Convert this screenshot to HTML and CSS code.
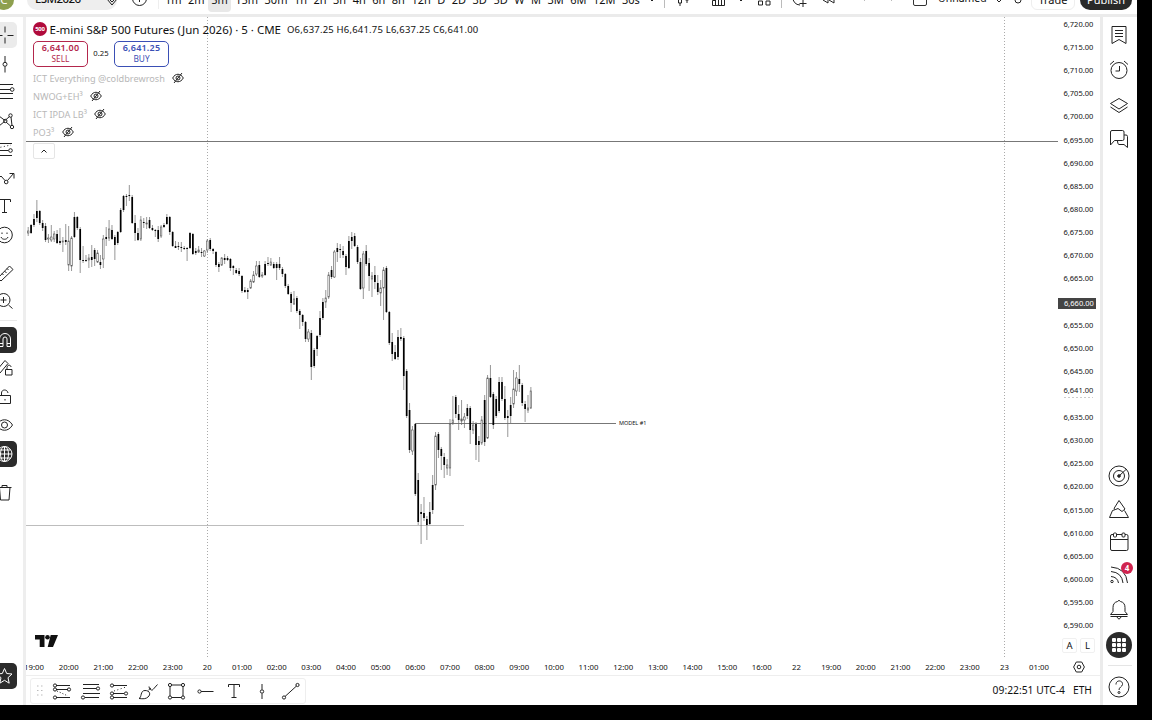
FILE: index.html
```html
<!DOCTYPE html>
<html>
<head>
	<meta charset="utf-8">
	<title>ESM2026</title>
	<link rel="stylesheet" href="styles.css">
</head>
<body>
	<div class="app">
		<div class="topbar">
			<div class="topbar-row">
				<div class="avatar">C</div>
				<div class="symbol"><span>ESM2026</span></div>
				<svg class="sym-diamond" width="14" height="14" viewBox="0 0 14 14"><path d="M2 6l5-5 5 5-5 6zM5 7l2 2 2-2"/></svg>
				<svg class="compare" width="17" height="17" viewBox="0 0 17 17"><circle cx="8.500" cy="8.500" r="7"/><path d="M8.500 5v7M5 8.500h7"/></svg>
				<div class="sep"></div>
				<div class="intervals">
					<span>1m</span><span>2m</span><span class="selected">5m</span><span>15m</span><span>30m</span><span>1h</span><span>2h</span><span>3h</span><span>4h</span><span>6h</span><span>8h</span><span>12h</span><span>D</span><span>2D</span><span>3D</span><span>5D</span><span>W</span><span>M</span><span>3M</span><span>6M</span><span>12M</span><span>30s</span>
				</div>
				<svg class="top-icons" width="275" height="24" viewBox="640 -12 275 24">
					<path d="M650 -1l2 2 2-2M739 -1l2 2 2-2"/>
					<path class="faint" d="M664.500-10v18M781.500-10v18"/>
					<path d="M678.500-6h3v9h-3zM680 3v3M685.500-6h3v6h-3zM687 0v3"/>
					<path d="M712.500 5.500v-5h3v-3h3v2h3v-4h3v10zM715.500 0v5M718.500 0v5M721.500 0v5"/>
					<path d="M758.500-6h4v4h-4zM766-6h4v4h-4zM758.500 1h4v4h-4zM766 1h4v4h-4z"/>
					<path d="M793-3a7 7 0 0 0 7 8M803 0v7M799.500 3.500h7"/>
					<path d="M828-3l-5 3 5 3zM834-3l-5 3 5 3z"/>
					<path class="faint" d="M861-3l4 4M861-1h7M895-3l-4 4M894-1h-7"/>
				</svg>
				<div class="layout-box"></div>
				<span class="layout-name">Unnamed</span>
				<svg class="search" width="30" height="16" viewBox="0 0 30 16"><path d="M3 8l2 2 2-2"/><circle cx="24" cy="8" r="3"/></svg>
				<div class="trade">Trade</div>
				<div class="publish">Publish</div>
			</div>
		</div>

		<div class="main">
			<div class="left-tools">
				<div class="tool active"><svg viewBox="0 0 28 28"><path d="M14 5.500v6M14 16.500v6M16.500 14.500h6M5.500 14.500h6"/></svg></div>
				<div class="tool"><svg viewBox="0 0 28 28"><path d="M14 6v6M14 16.500v6"/><circle cx="14" cy="14.300" r="2"/></svg></div>
				<div class="tool"><svg viewBox="0 0 28 28"><path d="M5 6.500h17M5 11.500h14.500M5 15.500h17M5 20.500h17"/><circle cx="21.200" cy="11.500" r="1.800"/></svg></div>
				<div class="tool"><svg viewBox="0 0 28 28"><path d="M8 9l6 4.500 4.500-4M15 15l4.500 4M8 19l5.500-4.500M20 10l1 8.500M8 9v10"/><circle cx="19.500" cy="8.500" r="1.700"/><circle cx="14.300" cy="14" r="1.700"/><circle cx="21" cy="20" r="1.700"/></svg></div>
				<div class="tool"><svg viewBox="0 0 28 28"><path d="M5 8.500h16M5 15.500h12.500M5 20.500h16"/><path stroke-dasharray="1 2.500" d="M6 13l14-3"/><circle cx="19.500" cy="15.500" r="1.800"/></svg></div>
				<div class="tool"><svg viewBox="0 0 28 28"><path d="M5 17l5-5 4 4.500M16.500 16.500l6-7M18.500 9.500h4.500v5"/><circle cx="15.200" cy="18" r="1.800"/></svg></div>
				<div class="tool"><svg viewBox="0 0 28 28"><path d="M7.500 10V7.500h12V10M13.500 7.500v13M11 20.500h5"/></svg></div>
				<div class="tool"><svg viewBox="0 0 28 28"><circle cx="13.500" cy="14" r="7.800"/><path d="M10 16c1 3 6 3 7 0M11 11.500v1.500M16 11.500v1.500"/></svg></div>
				<div class="tool gap"><svg viewBox="0 0 28 28"><path d="M7 19L18.500 7l3.500 3.500L10 22zM16 9.500l1.500 1.500M13.500 12l2 2M11 14.500l1.500 1.500"/></svg></div>
				<div class="tool"><svg viewBox="0 0 28 28"><circle cx="12.500" cy="13" r="6.500"/><path d="M17.500 18l4 3.500M12.500 10v6M9.500 13h6"/></svg></div>
				<div class="tool-line"></div>
				<div class="tool dark"><svg viewBox="0 0 28 28"><path d="M8.500 20.500V13a5.500 5.500 0 0 1 11 0v7.500h-3.500V13a2 2 0 0 0-4 0v7.500zM8.500 17.500h3.500M16 17.500h3.500"/></svg></div>
				<div class="tool"><svg viewBox="0 0 28 28"><path d="M6 16l8-9.500 3 3L9 19M14.500 15.500h6.500v5.500h-6.500zM16 15.500v-2c0-3 4-3 4-.5"/></svg></div>
				<div class="tool"><svg viewBox="0 0 28 28"><path d="M8 12.500h11.500v8H8zM10.500 12.500V10c0-4 6-4 6.500 0M14 16v1.500"/></svg></div>
				<div class="tool"><svg viewBox="0 0 28 28"><path d="M5.500 14c4-7 12-7 16 0-4 7-12 7-16 0z"/><circle cx="13.500" cy="14" r="3"/></svg></div>
				<div class="tool dark"><svg viewBox="0 0 28 28"><circle cx="13.500" cy="14" r="7.500"/><ellipse cx="13.500" cy="14" rx="4" ry="7.500"/><path d="M13.500 6.500v15M6 14h15M7.500 10h12M7.500 18h12"/></svg></div>
				<div class="tool gap"><svg viewBox="0 0 28 28"><path d="M7 9.500h13.500M11 9.500v-2h5v2M8.500 9.500l1 12.500h8.500l1-12.500"/></svg></div>
				<div class="tool dark star"><svg viewBox="0 0 28 28"><path d="M13.500 6.500l2.200 5 5.300.5-4 3.700 1.200 5.500-4.700-2.900-4.700 2.900L10 15.700 6 12l5.300-.5z"/></svg></div>
			</div>

			<div class="center">
				<div class="chart-row">
					<div class="pane">
						<svg id="chart" class="chart" width="1032" height="640" viewBox="26 17 1032 640">
							<path class="session" d="M207.500 17v640M1004.500 17v640"/>
							<path class="level" d="M26 141.500h1032M415 423.500h201"/>
							<path class="level-light" d="M26 525.500h438"/>
							<text class="model" x="619" y="425.300">MODEL #1</text>
							<g id="candles"></g>
						</svg>
						<div class="legend">
							<div class="title-row">
								<span class="badge500">500</span>
								<span class="title">E-mini S&amp;P 500 Futures (Jun 2026) · 5 · CME</span>
								<span class="ohlc">O6,637.25 H6,641.75 L6,637.25 C6,641.00</span>
							</div>
							<div class="quotes">
								<div class="quote sell"><b>6,641.00</b><span>SELL</span></div>
								<span class="spread">0.25</span>
								<div class="quote buy"><b>6,641.25</b><span>BUY</span></div>
							</div>
							<div class="study"><span>ICT Everything @coldbrewrosh</span><svg class="hidden-eye" viewBox="0 0 12 12"><path d="M.7 6c2.500-5 8-5 10.600 0-2.600 5-8.100 5-10.600 0zM2 11l8-10"/><circle cx="6" cy="6" r="2"/></svg></div>
							<div class="study"><span>NWOG+EH³</span><svg class="hidden-eye" viewBox="0 0 12 12"><path d="M.7 6c2.500-5 8-5 10.600 0-2.600 5-8.100 5-10.600 0zM2 11l8-10"/><circle cx="6" cy="6" r="2"/></svg></div>
							<div class="study"><span>ICT IPDA LB³</span><svg class="hidden-eye" viewBox="0 0 12 12"><path d="M.7 6c2.500-5 8-5 10.600 0-2.600 5-8.100 5-10.600 0zM2 11l8-10"/><circle cx="6" cy="6" r="2"/></svg></div>
							<div class="study"><span>PO3³</span><svg class="hidden-eye" viewBox="0 0 12 12"><path d="M.7 6c2.500-5 8-5 10.600 0-2.600 5-8.100 5-10.600 0zM2 11l8-10"/><circle cx="6" cy="6" r="2"/></svg></div>
							<div class="collapse"><svg width="8" height="6" viewBox="0 0 8 6"><path d="M1.500 4.500L4 2l2.500 2.500"/></svg></div>
						</div>
						<svg class="tv-logo" width="23" height="12" viewBox="0 0 23 12"><path d="M0 0h9.500v12H4.700V4.600H0zM15.700 0H23l-5 12h-5.300z"/><circle cx="12.500" cy="2.300" r="2.300"/></svg>
					</div>
					<div class="price-axis">
						<div id="prices" class="prices"></div>
						<div class="scale-buttons"><span>A</span><span>L</span></div>
					</div>
				</div>
				<div class="time-row">
					<div id="times" class="times"></div>
					<div class="axis-settings"><svg width="12" height="12" viewBox="0 0 12 12"><path d="M3.300 1h5.400L11.400 6 8.700 11H3.300L.6 6z"/><circle cx="6" cy="6" r="1.800"/></svg></div>
				</div>
				<div class="bottom-row">
					<div class="favorites">
						<svg class="drag" width="8" height="12" viewBox="0 0 8 12"><path d="M1 1h1.500M5 1h1.500M1 5.500h1.500M5 5.500h1.500M1 10h1.500M5 10h1.500"/></svg>
						<svg viewBox="0 0 28 28"><path d="M8 8.500h14M8 12.500h12M8 20.500h14"/><path stroke-dasharray="1 2" d="M9 14l11 5"/><circle cx="7" cy="8.500" r="1.600"/><circle cx="21" cy="12.500" r="1.600"/><circle cx="7" cy="12.500" r="1.600"/><circle cx="7" cy="20.500" r="1.600"/></svg>
						<svg viewBox="0 0 28 28"><path d="M6 7.500h16M6 11.500h13.500M6 16.500h17M8 20.500h14"/><circle cx="21" cy="11.500" r="1.600"/><circle cx="6" cy="20.500" r="1.600"/></svg>
						<svg viewBox="0 0 28 28"><path d="M8 8.500h14M8 16.500h11M8 20.500h14"/><path stroke-dasharray="1 2.500" d="M9 14l12-4"/><circle cx="7" cy="8.500" r="1.600"/><circle cx="7" cy="16.500" r="1.600"/><circle cx="21" cy="16.500" r="1.600"/><circle cx="7" cy="20.500" r="1.600"/></svg>
						<svg viewBox="0 0 28 28"><path d="M5 21.500c3-1 1-8 6-8 5 0 6 4 3 6.500-2 2-5 2-9 1.500zM15 9.500c0 3 3 4.500 4 3l4.500-5M14.500 13l2.500-2"/></svg>
						<svg viewBox="0 0 28 28"><path d="M9.500 8h10M9.500 20.500h10M8 9.500v9.500M21 9.500v9.500"/><circle cx="8" cy="8" r="1.600"/><circle cx="21" cy="8" r="1.600"/><circle cx="8" cy="20.500" r="1.600"/><circle cx="21" cy="20.500" r="1.600"/></svg>
						<svg viewBox="0 0 28 28"><path d="M10 14.500h12.500"/><circle cx="8.500" cy="14.500" r="1.600"/></svg>
						<svg viewBox="0 0 28 28"><path d="M8.500 10V7.500h11V10M14 7.500v13M11.500 20.500h5"/></svg>
						<svg viewBox="0 0 28 28"><path d="M14 7v5.500M14 16.500V22"/><circle cx="14" cy="14.500" r="1.700"/></svg>
						<svg viewBox="0 0 28 28"><path d="M8 19.500L19.500 9"/><circle cx="7" cy="20.500" r="1.600"/><circle cx="20.500" cy="8" r="1.600"/></svg>
					</div>
					<div class="clock"><span>09:22:51 UTC-4</span><span>ETH</span></div>
				</div>
			</div>

			<div class="right-tools">
				<div class="panel-btn first"><svg viewBox="0 0 28 28"><path d="M7 5.500h14v17l-7-4-7 4zM10 9.500h8M10 12.500h8M10 15.500h8"/></svg></div>
				<div class="panel-btn first"><svg viewBox="0 0 28 28"><circle cx="14" cy="14.500" r="8"/><path d="M14.500 10v5h-4M5 8.500l4-3.500M23 8.500L19 5"/></svg></div>
				<div class="panel-btn first"><svg viewBox="0 0 28 28"><path d="M5.500 12.500L14 7.500l8.500 5-8.500 5.500zM5.500 16l8.500 5.500 8.500-5.500"/></svg></div>
				<div class="panel-btn first"><svg viewBox="0 0 28 28"><path d="M5.500 20V7q0-1.500 1.500-1.500h10.500q1.500 0 1.500 1.500v7q0 1.500-1.500 1.500H9.500zM19 10h2q1.500 0 1.500 1.500V22.500l-3.500-3h-5q-1.500 0-1.500-3.500"/></svg></div>
				<div class="panel-btn bottom-start"><svg viewBox="0 0 28 28"><circle cx="14" cy="14" r="10"/><circle cx="14" cy="14" r="5.500"/><circle class="solid" cx="14" cy="14" r="1.300"/><path d="M14 14l7-6.500"/></svg></div>
				<div class="panel-btn"><svg viewBox="0 0 28 28"><path d="M9 13.500l5-8 6 8.500-3 2.500-4-3-2.500 1zM7.500 15.500l-3 7h19l-4-7M7.500 15.500l3-1"/></svg></div>
				<div class="panel-btn"><svg viewBox="0 0 28 28"><rect x="5.500" y="6.500" width="17.500" height="16" rx="1.500"/><path d="M5.500 11.500h17.500"/><rect class="paper" x="8.500" y="5" width="3" height="4" rx="1"/><rect class="paper" x="17" y="5" width="3" height="4" rx="1"/></svg></div>
				<div class="panel-btn"><svg viewBox="0 0 28 28"><path d="M6 6q15 1 16.500 16M6 10.500q11 1 12 11.500M6 15.500q6.500.5 7.500 6.500"/><circle cx="7" cy="20.500" r="1.200"/></svg><span class="count">4</span></div>
				<div class="panel-btn bell"><svg viewBox="0 0 28 28"><path d="M5.500 19.500l2.500-3v-4q0-5 4.500-6 1.500-2.500 3 0 4.500 1 4.500 6v4l2.500 3zM5.500 21.500h17M12 22q2 4 4 0"/></svg></div>
				<div class="panel-btn"><div class="apps"><i></i><i></i><i></i><i></i><i></i><i></i><i></i><i></i><i></i></div></div>
				<div class="panel-line"></div>
				<div class="panel-btn help"><svg viewBox="0 0 28 28"><circle cx="14" cy="14" r="10"/><path d="M11 11.500c0-5 7-4.500 6.500 0-.5 2.500-3.500 2.500-3.500 5.500"/><circle cx="14" cy="19.500" r="1"/></svg></div>
			</div>
		</div>
	</div>
	<script src="chart.js"></script>
</body>
</html>
```
FILE: styles.css
```css
* {
	box-sizing: border-box;
}
body {
	margin: 0;
	background: #000;
	color: #111;
	font-family: "Noto Sans", "Open Sans", sans-serif;
	overflow: hidden;
}
svg {
	fill: none;
	stroke: #222;
	stroke-width: 1;
	flex: none;
}
.app {
	width: 1137px;
	height: 705px;
	background: #fff;
	display: flex;
	flex-direction: column;
}

/* top bar, scrolled half out of view */
.topbar {
	height: 17px;
	border-bottom: 3px solid #ebebeb;
	overflow: hidden;
	flex: none;
}
.topbar-row {
	display: flex;
	align-items: center;
	height: 24px;
	margin-top: -12px;
	font-size: 11.5px;
	line-height: 24px;
}
.avatar {
	width: 20px;
	height: 20px;
	margin-left: -6px;
	border-radius: 50%;
	background: #8ea04f;
	color: #fff;
	text-align: center;
	line-height: 19px;
	flex: none;
}
.symbol {
	width: 90px;
	height: 20px;
	margin-left: 13px;
	padding-left: 8px;
	border-radius: 10px;
	background: #eee;
	line-height: 18px;
	font-weight: 500;
	letter-spacing: -0.6px;
}
.sym-diamond {
	margin-left: -12px;
}
.compare {
	margin: -4px 0 0 12px;
}
.sep {
	width: 1px;
	height: 18px;
	margin-left: 10px;
	background: #eee;
}
.intervals {
	width: 475px;
	margin-left: 6px;
	display: flex;
	justify-content: space-between;
	line-height: 21px;
	font-size: 11px;
}
.selected {
	margin: 0 -2px 0 -3px;
	padding: 0 3px;
	height: 23px;
	border-radius: 4px;
	background: #e8e8e8;
}
.faint {
	stroke: #bbb;
}
.layout-box {
	width: 14px;
	height: 12px;
	margin-left: -2px;
	border: 1px solid #333;
	border-radius: 2px;
}
.layout-name {
	width: 48px;
	margin-left: 11px;
	font-size: 10.5px;
	line-height: 21px;
	height: 24px;
}
.search {
	margin-left: 8px;
}
.trade {
	width: 44px;
	height: 20px;
	margin-left: 7px;
	border: 1px solid #eee;
	border-radius: 6px;
	text-align: center;
	line-height: 17px;
	font-size: 11px;
}
.publish {
	width: 52px;
	height: 22px;
	margin-left: 5px;
	margin-top: -3px;
	border-radius: 10px;
	background: #292929;
	color: #fff;
	text-align: center;
	line-height: 23px;
	font-size: 11px;
}

.main {
	flex: 1;
	min-height: 0;
	display: flex;
}

/* drawing tools */
.left-tools {
	width: 26px;
	padding-top: 4px;
	padding-bottom: 16px;
	border-right: 3px solid #eee;
	overflow: hidden;
	display: flex;
	flex-direction: column;
	flex: none;
}
.tool {
	width: 28px;
	height: 28.5px;
	margin-left: -11px;
	display: flex;
	align-items: center;
	flex: none;
}
.tool svg {
	width: 28px;
	height: 28px;
	margin-left: 1.5px;
}
.active, .dark {
	height: 26px;
	margin-top: 1.2px;
	margin-bottom: 1.3px;
	border-radius: 5px;
}
.active {
	background: #ebebeb;
}
.dark {
	background: #2b2b2b;
}
.dark svg {
	stroke: #fff;
}
.gap {
	margin-top: 9.5px;
}
.tool-line {
	height: 1px;
	width: 17px;
	margin: 5px 0 4px;
	background: #e8e8e8;
	flex: none;
}
.star {
	margin-top: auto;
	margin-bottom: 0;
}

/* chart */
.center {
	width: 1074px;
	display: flex;
	flex-direction: column;
	flex: none;
}
.chart-row {
	display: flex;
	height: 640px;
}
.pane {
	display: grid;
	width: 1032px;
}
.chart, .legend, .tv-logo {
	grid-area: 1 / 1;
}
.session {
	stroke: #aaa;
	stroke-dasharray: 1 2;
}
.level {
	stroke: #777;
}
.level-light {
	stroke: #bdbdbd;
}
.model {
	fill: #111;
	stroke: none;
	font-size: 5.5px;
}
.wick {
	stroke: #6a6a6a;
	stroke-width: 0.7;
}
.down {
	fill: #000;
	stroke: none;
}
.up {
	fill: #fff;
	stroke: #555;
	stroke-width: 0.6;
}
.tv-logo {
	align-self: end;
	margin: 0 0 10px 9px;
	fill: #111;
	stroke: none;
}
.legend {
	padding: 5px 0 0 7px;
}
.title-row {
	display: flex;
	align-items: center;
	height: 15px;
	white-space: nowrap;
}
.badge500 {
	width: 14px;
	height: 14px;
	border-radius: 50%;
	background: #b00b3c;
	color: #fff;
	font-size: 6px;
	font-weight: bold;
	line-height: 14px;
	text-align: center;
	letter-spacing: -0.2px;
	position: relative;
	top: -1px;
}
.title {
	width: 240px;
	padding-left: 2.5px;
	font-size: 11.5px;
}
.ohlc {
	font-size: 9.5px;
	letter-spacing: 0.2px;
	line-height: 13px;
	padding-bottom: 1px;
}
.quotes {
	display: flex;
	align-items: center;
	margin-top: 3px;
	height: 28px;
}
.quote {
	width: 55px;
	height: 26px;
	border: 1px solid;
	border-radius: 5px;
	display: flex;
	flex-direction: column;
	align-items: center;
	padding-top: 1px;
	font-size: 8.3px;
	line-height: 10.5px;
}
.quote b {
	font-size: 9px;
	font-weight: 600;
	letter-spacing: 0.2px;
}
.sell {
	color: #b3264c;
}
.buy {
	color: #3a4fb5;
}
.spread {
	width: 26px;
	padding-bottom: 3px;
	text-align: center;
	font-size: 7.7px;
}
.study {
	display: flex;
	align-items: center;
	height: 18px;
	color: #b8b8b8;
	font-size: 9.2px;
	white-space: nowrap;
	position: relative;
	top: 1px;
}
.hidden-eye {
	width: 12px;
	height: 12px;
	margin-left: 7.5px;
}
.collapse {
	width: 22px;
	height: 16px;
	margin-top: 3px;
	border: 1px solid #e5e5e5;
	border-radius: 2px;
	display: flex;
	align-items: center;
	justify-content: center;
}

.price-axis {
	width: 42px;
	display: flex;
	flex-direction: column;
	overflow: hidden;
}
.prices {
	margin-top: -4.1px;
}
.price {
	height: 23.13px;
	display: flex;
	align-items: center;
	width: 38px;
	padding-left: 5.5px;
	font-size: 7.5px;
}
.price span {
	line-height: 11px;
}
.crosshair {
	padding-top: 2.5px;
}
.crosshair span {
	width: 38px;
	margin-left: -5.5px;
	padding-left: 6px;
	background: #444;
	color: #fff;
	flex: none;
}
.last {
	padding-bottom: 8px;
}
.last span {
	background: linear-gradient(90deg, #ccc 50%, transparent 50%) 0 100% / 4px 1px repeat-x;
	height: 13px;
	margin-bottom: -2px;
}
.scale-buttons {
	display: flex;
	gap: 3px;
	margin: 1px 0 0 4px;
}
.scale-buttons span {
	width: 15px;
	height: 15px;
	border: 1px solid #f0f0f0;
	border-radius: 2px;
	text-align: center;
	font-size: 9.5px;
	line-height: 13px;
}

.time-row {
	display: flex;
	height: 19px;
	border-bottom: 1px solid #eee;
}
.times {
	width: 1032px;
	display: flex;
	overflow: hidden;
}
.times span {
	width: 34.66px;
	flex: none;
	text-align: center;
	font-size: 7.8px;
	line-height: 20px;
}
.times span:first-child {
	margin-left: -9.3px;
}
.axis-settings {
	width: 42px;
	padding-top: 2px;
	display: flex;
	align-items: center;
	justify-content: center;
}

.bottom-row {
	flex: 1;
	display: flex;
	align-items: center;
	justify-content: space-between;
}
.favorites {
	width: 276px;
	height: 26px;
	margin-left: 4px;
	padding-left: 5px;
	border: 1px solid #eee;
	border-radius: 3px;
	display: flex;
	align-items: center;
}
.favorites svg {
	width: 28px;
	height: 28px;
	margin-right: 0.6px;
}
.favorites .drag {
	width: 8px;
	height: 12px;
	margin-right: 4px;
	stroke: #bbb;
}
.clock {
	display: flex;
	gap: 8px;
	padding-right: 8px;
	padding-bottom: 1px;
	font-size: 10.3px;
	white-space: nowrap;
}

/* side panel buttons */
.right-tools {
	width: 37px;
	border-left: 3px solid #ebebeb;
	padding-top: 1px;
	padding-bottom: 1px;
	display: flex;
	flex-direction: column;
	align-items: center;
	flex: none;
}
.panel-btn {
	width: 34px;
	height: 33.2px;
	padding-right: 2px;
	display: flex;
	align-items: center;
	justify-content: center;
	position: relative;
	flex: none;
}
.first {
	height: 34.7px;
}
.help {
	height: 33.8px;
}
.panel-btn svg {
	width: 28px;
	height: 28px;
}
.bottom-start {
	margin-top: auto;
}
.bell {
	margin: 1px 0 2px;
}
.solid {
	fill: #222;
}
.paper {
	fill: #fff;
}
.count {
	position: absolute;
	top: 3px;
	right: 4px;
	width: 12px;
	height: 12px;
	border-radius: 50%;
	background: #d0244f;
	color: #fff;
	font-size: 8px;
	font-weight: bold;
	line-height: 12px;
	text-align: center;
}
.apps {
	width: 26px;
	height: 26px;
	padding: 6px;
	border-radius: 50%;
	background: #2b2b2b;
	display: grid;
	grid-template-columns: repeat(3, 4px);
	grid-auto-rows: 4px;
	gap: 1px;
	flex: none;
}
.apps i {
	background: #fff;
	border-radius: 1px;
}
.panel-line {
	width: 24px;
	height: 1px;
	margin: 4px 0;
	background: #e5e5e5;
	flex: none;
}
```
FILE: chart.js
```js
// high, body top, body bottom, low, rising
const bars = [
	[227,231,233,236,1],[224,225,233,234,0],[214,219,225,227,0],[200,211,218,222,0],[210,211,223,225,0],[220,223,228,231,0],
	[223,226,240,242,0],[234,238,239,243,1],[225,237,240,242,1],[231,234,239,242,1],[230,234,243,244,0],[228,241,243,245,0],
	[237,241,242,252,1],[224,240,242,245,0],[226,241,265,271,1],[236,238,266,271,1],[212,217,237,238,0],[216,217,228,230,0],
	[227,229,260,273,0],[246,260,261,263,0],[255,260,261,262,0],[254,258,260,268,1],[245,257,260,267,0],[248,250,259,266,0],
	[250,253,262,263,1],[255,262,265,269,0],[235,239,259,268,1],[227,237,239,246,0],[220,229,238,241,1],[225,230,239,240,0],
	[235,237,245,260,0],[231,232,243,245,0],[208,210,232,233,0],[195,196,210,212,0],[194,196,197,206,0],[185,195,196,201,0],
	[195,197,223,224,0],[215,223,233,241,0],[228,233,240,241,0],[216,220,239,241,1],[218,222,223,228,0],[217,223,224,229,1],
	[217,220,228,229,0],[225,228,230,231,0],[229,230,231,237,0],[226,230,239,242,0],[225,227,236,238,1],[223,225,227,228,0],
	[214,217,224,225,0],[216,217,232,235,0],[231,232,246,247,0],[241,246,248,248,0],[242,246,247,250,0],[242,247,248,252,0],
	[246,248,249,250,0],[247,248,249,261,0],[232,233,248,249,0],[233,234,254,255,0],[248,251,253,255,0],[246,250,252,253,1],
	[248,252,253,257,0],[250,251,256,257,1],[239,241,250,253,1],[238,240,249,251,0],[248,249,251,254,0],[251,252,265,267,0],
	[262,264,267,272,0],[257,258,265,266,1],[254,258,260,264,0],[256,258,260,261,0],[258,259,268,271,0],[265,266,268,275,0],
	[268,270,273,274,0],[268,271,274,276,0],[275,276,291,293,0],[287,290,292,293,0],[288,290,292,299,0],[279,281,288,289,1],
	[271,275,282,283,1],[261,266,274,276,1],[261,265,277,278,0],[272,275,276,278,1],[261,264,275,276,0],[257,263,264,266,0],
	[258,262,265,266,1],[262,264,268,269,0],[262,264,268,280,0],[257,264,268,270,0],[267,269,274,277,0],[273,274,286,288,0],
	[284,286,294,295,0],[292,294,303,312,0],[291,299,304,305,1],[296,298,311,313,0],[309,311,315,329,0],[314,315,322,326,0],
	[321,322,339,342,0],[329,332,339,342,1],[330,333,367,380,0],[348,350,366,368,0],[335,336,349,356,0],[311,318,335,337,0],
	[298,302,318,320,0],[290,298,302,308,1],[272,275,297,299,1],[266,270,277,279,0],[250,252,277,278,1],[243,248,252,262,0],
	[244,249,250,258,0],[246,251,255,258,0],[254,256,267,275,0],[236,241,268,269,0],[232,237,241,249,0],[233,236,246,247,0],
	[245,247,262,264,0],[258,262,289,290,0],[251,254,288,299,1],[245,251,264,266,0],[258,263,276,291,0],[272,276,279,297,1],
	[266,275,282,289,0],[275,283,292,295,0],[280,288,293,306,1],[267,270,288,320,1],[266,268,312,313,0],[311,312,343,345,0],
	[333,342,354,361,0],[345,352,359,360,0],[330,337,357,360,0],[328,337,339,341,0],[336,338,376,390,0],[369,371,416,418,0],
	[403,410,450,453,0],[426,430,451,455,1],[423,424,494,496,0],[473,480,522,525,0],[504,512,514,544,0],[497,513,518,521,0],
	[516,519,525,540,0],[502,512,524,525,0],[475,485,510,514,0],[432,436,485,490,1],[432,434,450,458,0],[447,449,456,470,0],
	[453,457,465,478,0],[459,465,468,475,1],[419,424,468,476,1],[396,420,423,425,1],[395,397,414,418,0],[405,414,420,430,0],
	[400,419,421,425,1],[413,417,420,428,1],[404,408,416,419,0],[406,408,430,444,0],[421,425,430,434,1],[422,424,445,460,0],
	[436,441,445,462,0],[416,420,443,445,1],[395,400,442,446,0],[375,378,438,439,1],[365,378,397,398,0],[392,394,425,429,0],
	[396,399,416,418,0],[377,382,411,413,0],[377,382,399,401,0],[386,399,418,420,0],[410,416,418,437,0],[397,405,416,423,0],
	[370,389,404,408,1],[372,378,391,396,1],[365,379,384,392,0],[383,385,403,406,0],[401,404,409,422,0],[395,408,410,413,1],
	[387,391,408,409,1]
];

const barWidth = 2.889;
let out = "";
bars.forEach(([high, top, bottom, low, up], i) => {
	const x = 28.2 + i * barWidth;
	const w = up ? 1.5 : 1.7;
	out += `<path class="wick" d="M${x} ${high}V${low}"/>`;
	out += `<rect class="${up ? "up" : "down"}" x="${x - w / 2}" y="${top}" width="${w}" height="${bottom - top}"/>`;
});
document.getElementById("candles").innerHTML = out;

// price scale
let rows = "";
for (let p = 6720; p >= 6590; p -= 5) {
	const value = p === 6640 ? 6641 : p;
	const cls = p === 6660 ? " crosshair" : p === 6640 ? " last" : "";
	rows += `<div class="price${cls}"><span>${value.toLocaleString("en-US")}.00</span></div>`;
}
document.getElementById("prices").innerHTML = rows;

// time scale
const hours = (from, to) => {
	const list = [];
	for (let h = from; h <= to; h++) list.push(String(h).padStart(2, "0") + ":00");
	return list;
};
const times = [...hours(19, 23), "20", ...hours(1, 16), "22", ...hours(19, 23), "23", "01:00"];
document.getElementById("times").innerHTML = times.map(t => `<span>${t}</span>`).join("");
```
